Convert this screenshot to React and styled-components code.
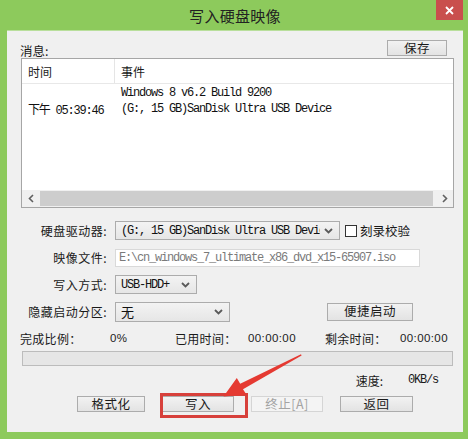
import styled, { createGlobalStyle } from "styled-components";

const GlobalStyle = createGlobalStyle`
  html, body { margin: 0; padding: 0; background: #ffffff; }
  body { font-family: "Noto Sans CJK SC", "Noto Sans", sans-serif; }
`;

const cjk = `"Noto Sans CJK SC", "Noto Sans", sans-serif`;
const mono = `"Liberation Mono", "Noto Sans CJK SC", monospace`;

const Frame = styled.div`
  position: relative;
  width: 468px;
  height: 439px;
  box-sizing: border-box;
  padding: 0 5px 7px 7px;
  background: #8dca5c;
  display: flex;
  flex-direction: column;
`;

const TitleBar = styled.div`
  height: 30px;
  display: grid;
  grid-template-columns: 1fr auto 1fr;
  align-items: center;
`;

const Title = styled.div`
  grid-column: 2;
  font-family: ${cjk};
  font-size: 15px;
  color: #222;
  letter-spacing: 0.3px;
`;

const CloseBtn = styled.div`
  grid-column: 3;
  justify-self: end;
  align-self: start;
  width: 27px;
  height: 20px;
  background: #c94f4d;
  display: flex;
  align-items: center;
  justify-content: center;
`;

const Client = styled.div`
  flex: 1;
  background: #f0f0f0;
  border-top: 1px solid #b9df9c;
  box-sizing: border-box;
  padding: 9px 9px 0 13px;
  display: flex;
  flex-direction: column;
  font-family: ${cjk};
  font-size: 12px;
  color: #1a1a1a;
`;

const TopRow = styled.div`
  height: 18px;
  display: flex;
  justify-content: space-between;
  align-items: flex-start;
  padding-right: 7px;
`;

const MsgLabel = styled.span`
  padding-top: 3px;
  line-height: 16px;
  font-size: 12.5px;
`;

const Button = styled.div`
  width: ${(p) => p.$w || 60}px;
  height: 16px;
  box-sizing: border-box;
  border: 1px solid ${(p) => (p.$disabled ? "#d5d5d5" : "#acacac")};
  background: ${(p) =>
    p.$disabled ? "#f4f4f4" : "linear-gradient(#f2f2f2, #e3e3e3)"};
  color: ${(p) => (p.$disabled ? "#a3a3a3" : "#1a1a1a")};
  display: flex;
  align-items: center;
  justify-content: center;
  font-size: 12.5px;
  letter-spacing: 0.5px;
  line-height: 1;
`;

const ListBox = styled.div`
  margin-left: 1px;
  width: 433px;
  height: 150px;
  box-sizing: border-box;
  border: 1px solid #a6a6a6;
  background: #ffffff;
  display: flex;
  flex-direction: column;
`;

const ListHeader = styled.div`
  height: 25px;
  display: flex;
  border-bottom: 1px solid #e8e8e8;
  box-sizing: border-box;
`;

const HeadCell = styled.div`
  width: ${(p) => (p.$w ? `${p.$w}px` : "auto")};
  flex: ${(p) => (p.$w ? "none" : 1)};
  box-sizing: border-box;
  padding-left: 6px;
  display: flex;
  align-items: center;
  border-right: ${(p) => (p.$w ? "1px solid #e5e5e5" : "none")};
`;

const ListBody = styled.div`
  flex: 1;
  padding-top: 1px;
`;

const ListRow = styled.div`
  height: 16px;
  display: flex;
  align-items: center;
  font-family: ${mono};
  font-size: 12px;
  letter-spacing: -1.2px;
  white-space: nowrap;
  color: #111;
`;

const TimeCell = styled.div`
  width: 93px;
  padding-left: 6px;
  box-sizing: border-box;
`;

const EventCell = styled.div`
  padding-left: 6px;
`;

const ScrollBar = styled.div`
  height: 17px;
  display: flex;
  background: #f0f0f0;
`;

const ScrollArrow = styled.div`
  width: 17px;
  display: flex;
  align-items: center;
  justify-content: center;
`;

const Thumb = styled.div`
  flex: 1;
  margin: 1px 3px 1px 1px;
  background: #cdcdcd;
`;

const Form = styled.div`
  margin-top: 9px;
  display: flex;
  flex-direction: column;
`;

const FormRow = styled.div`
  height: 27px;
  display: flex;
  align-items: center;
`;

const Label = styled.div`
  width: 87px;
  margin-right: 8px;
  text-align: right;
  font-size: 12px;
  letter-spacing: 0.5px;
  white-space: nowrap;
`;

const Select = styled.div`
  width: ${(p) => p.$w}px;
  height: ${(p) => p.$h || 19}px;
  box-sizing: border-box;
  border: 1px solid #acacac;
  background: linear-gradient(#f3f3f3, #e6e6e6);
  display: flex;
  align-items: center;
  padding: 0 6px 0 5px;
  overflow: hidden;
`;

const SelectText = styled.span`
  flex: 1;
  overflow: hidden;
  white-space: nowrap;
  font-family: ${(p) => (p.$cjk ? cjk : mono)};
  font-size: ${(p) => (p.$cjk ? "13px" : "12px")};
  letter-spacing: ${(p) => (p.$cjk ? "0" : "-1.2px")};
  color: #111;
`;

const Chevron = styled.svg`
  flex: none;
  margin-left: 4px;
`;

const TextInput = styled.div`
  width: 305px;
  height: 18px;
  box-sizing: border-box;
  border: 1px solid #d9d9d9;
  background: #ffffff;
  display: flex;
  align-items: center;
  padding-left: 3px;
  font-family: ${mono};
  font-size: 12px;
  letter-spacing: -1.2px;
  color: #7a7a7a;
  white-space: nowrap;
  overflow: hidden;
`;

const Check = styled.label`
  margin-left: 5px;
  display: flex;
  align-items: center;
  gap: 3px;
  font-size: 12.5px;
`;

const Box = styled.span`
  width: 12px;
  height: 12px;
  box-sizing: border-box;
  border: 1px solid #333;
  background: #fff;
`;

const Spacer = styled.div`
  width: ${(p) => p.$w}px;
`;

const Stats = styled.div`
  height: 26px;
  display: grid;
  grid-template-columns: 90px 65px 73px 77px 75px auto;
  align-items: center;
  font-size: 12px;
`;

const StatLabel = styled.span`
  letter-spacing: 0.3px;
  white-space: nowrap;
`;

const StatValue = styled.span`
  font-family: "Liberation Sans", sans-serif;
  font-size: 11.5px;
  letter-spacing: 0.4px;
  color: #222;
`;

const Progress = styled.div`
  margin-left: 2px;
  width: 431px;
  height: 15px;
  box-sizing: border-box;
  border: 1px solid #bcbcbc;
  background: #e6e6e6;
`;

const SpeedRow = styled.div`
  height: 28px;
  display: flex;
  align-items: center;
  justify-content: flex-end;
  gap: 25px;
  padding-right: 16px;
`;

const Mono = styled.span`
  font-family: ${mono};
  font-size: 12px;
  letter-spacing: -1.2px;
`;

const ButtonRow = styled.div`
  margin-top: 2px;
  display: flex;
  gap: 17px;
  padding-left: 57px;
`;

const Overlay = styled.svg`
  position: absolute;
  left: 0;
  top: 0;
  pointer-events: none;
`;

function Caret() {
  return (
    <Chevron width="9" height="6" viewBox="0 0 9 6">
      <polyline points="1,1 4.5,4.5 8,1" fill="none" stroke="#5a5a5a" strokeWidth="1.8" />
    </Chevron>
  );
}

function App() {
  return (
    <>
      <GlobalStyle />
      <Frame>
        <TitleBar>
          <Title>写入硬盘映像</Title>
          <CloseBtn>
            <svg width="9" height="9" viewBox="0 0 9 9">
              <path d="M1 1 L8 8 M8 1 L1 8" stroke="#fff" strokeWidth="1.8" />
            </svg>
          </CloseBtn>
        </TitleBar>
        <Client>
          <TopRow>
            <MsgLabel>消息:</MsgLabel>
            <Button $w={60}>保存</Button>
          </TopRow>
          <ListBox>
            <ListHeader>
              <HeadCell $w={93}>时间</HeadCell>
              <HeadCell>事件</HeadCell>
            </ListHeader>
            <ListBody>
              <ListRow>
                <TimeCell></TimeCell>
                <EventCell>Windows 8 v6.2 Build 9200</EventCell>
              </ListRow>
              <ListRow>
                <TimeCell>下午 05:39:46</TimeCell>
                <EventCell>(G:, 15 GB)SanDisk Ultra USB Device</EventCell>
              </ListRow>
            </ListBody>
            <ScrollBar>
              <ScrollArrow>
                <svg width="6" height="9" viewBox="0 0 6 9">
                  <polyline points="5,1 1.5,4.5 5,8" fill="none" stroke="#606060" strokeWidth="1.6" />
                </svg>
              </ScrollArrow>
              <Thumb />
              <ScrollArrow>
                <svg width="6" height="9" viewBox="0 0 6 9">
                  <polyline points="1,1 4.5,4.5 1,8" fill="none" stroke="#606060" strokeWidth="1.6" />
                </svg>
              </ScrollArrow>
            </ScrollBar>
          </ListBox>

          <Form>
            <FormRow>
              <Label>硬盘驱动器:</Label>
              <Select $w={225}>
                <SelectText>(G:, 15 GB)SanDisk Ultra USB Device</SelectText>
                <Caret />
              </Select>
              <Check>
                <Box />
                刻录校验
              </Check>
            </FormRow>
            <FormRow>
              <Label>映像文件:</Label>
              <TextInput>E:\cn_windows_7_ultimate_x86_dvd_x15-65907.iso</TextInput>
            </FormRow>
            <FormRow>
              <Label>写入方式:</Label>
              <Select $w={82}>
                <SelectText>USB-HDD+</SelectText>
                <Caret />
              </Select>
            </FormRow>
            <FormRow>
              <Label>隐藏启动分区:</Label>
              <Select $w={115} $h={20}>
                <SelectText $cjk>无</SelectText>
                <Caret />
              </Select>
              <Spacer $w={97} />
              <Button $w={86} style={{ height: 18 }}>便捷启动</Button>
            </FormRow>
          </Form>

          <Stats>
            <StatLabel>完成比例：</StatLabel>
            <StatValue>0%</StatValue>
            <StatLabel>已用时间：</StatLabel>
            <StatValue>00:00:00</StatValue>
            <StatLabel>剩余时间：</StatLabel>
            <StatValue>00:00:00</StatValue>
          </Stats>
          <Progress />
          <SpeedRow>
            <span>速度:</span>
            <Mono>0KB/s</Mono>
          </SpeedRow>
          <ButtonRow>
            <Button $w={68}>格式化</Button>
            <Button $w={72}>写入</Button>
            <Button $w={72} $disabled>终止[A]</Button>
            <Button $w={73}>返回</Button>
          </ButtonRow>
        </Client>

        <Overlay width="468" height="439" viewBox="0 0 468 439">
          <rect x="161.5" y="394.5" width="85" height="22" fill="none" stroke="#d7403b" strokeWidth="3" />
          <polygon
            points="301,354.3 240.2,383.8 236.8,378 223.5,396.5 246.4,394.6 243,389.2 301.6,355.6"
            fill="#e53a32"
          />
        </Overlay>
      </Frame>
    </>
  );
}

export default App;
